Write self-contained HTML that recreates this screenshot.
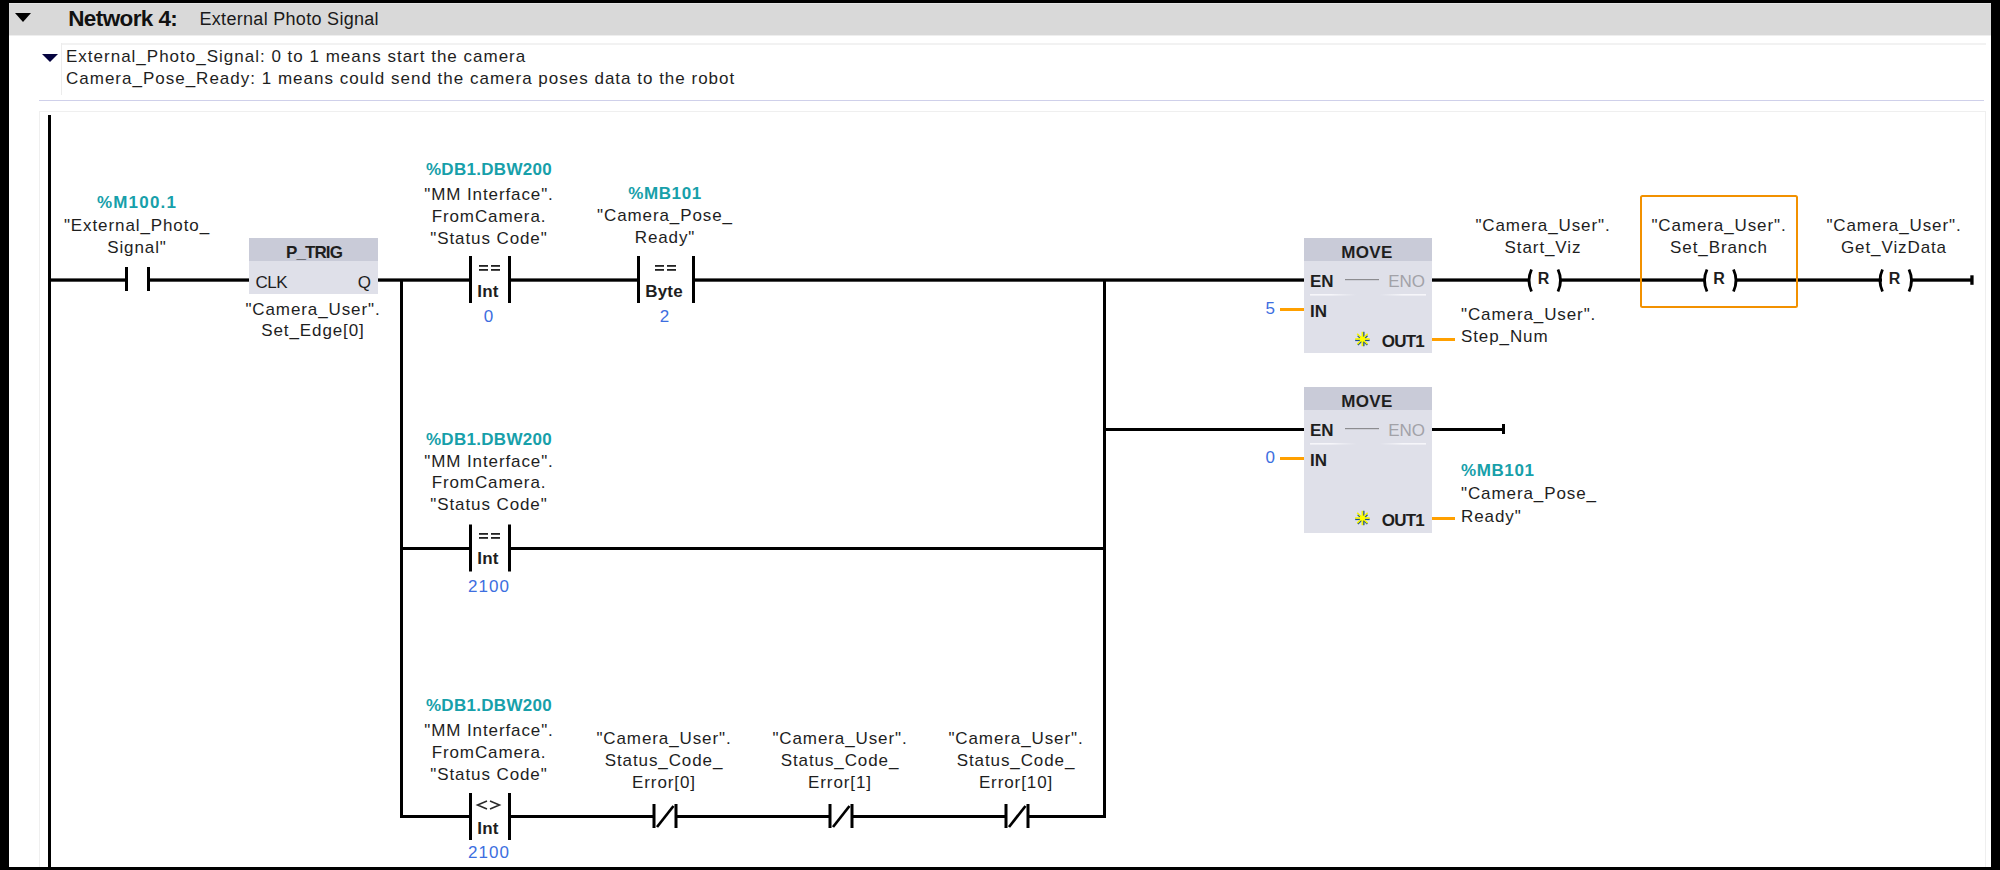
<!DOCTYPE html>
<html><head><meta charset="utf-8"><style>
html,body{margin:0;padding:0;width:2000px;height:870px;overflow:hidden;background:#000;font-family:"Liberation Sans", sans-serif;}
</style></head><body>
<svg width="2000" height="870" viewBox="0 0 2000 870" style="position:absolute;left:0;top:0" font-family='"Liberation Sans", sans-serif'>
<defs><linearGradient id="sepg" x1="0" x2="1" y1="0" y2="0"><stop offset="0" stop-color="#f6f6fa"/><stop offset="0.18" stop-color="#f6f6fa"/><stop offset="0.4" stop-color="#f6f6fa" stop-opacity="0"/><stop offset="0.6" stop-color="#f6f6fa" stop-opacity="0"/><stop offset="0.8" stop-color="#f6f6fa"/><stop offset="1" stop-color="#f6f6fa"/></linearGradient></defs>
<rect x="0" y="0" width="2000" height="870" fill="#000"/>
<rect x="9" y="3" width="1982" height="864" fill="#ffffff"/>
<rect x="9" y="3" width="1982" height="32" fill="#d9d9d9"/>
<rect x="9" y="3" width="1982" height="1" fill="#e4e4e4"/>
<rect x="9" y="35" width="1982" height="1" fill="#eeeeee"/>
<path d="M15,13 L31,13 L23,22 Z" fill="#000"/>
<text x="68.2" y="25.7" font-size="22.5" fill="#111" text-anchor="start" font-weight="bold" letter-spacing="-0.6">Network 4:</text>
<text x="199.5" y="24.7" font-size="18" fill="#1a1a1a" text-anchor="start" font-weight="normal" letter-spacing="0.3">External Photo Signal</text>
<rect x="61" y="43" width="1925" height="2" fill="#f2f2f2"/>
<rect x="61" y="43" width="1" height="52" fill="#ececec"/>
<path d="M42,54 L58,54 L50,62 Z" fill="#05033f"/>
<text x="66" y="61.8" font-size="17" fill="#1e1e1e" text-anchor="start" font-weight="normal" letter-spacing="1.0">External_Photo_Signal: 0 to 1 means start the camera</text>
<text x="66" y="83.5" font-size="17" fill="#1e1e1e" text-anchor="start" font-weight="normal" letter-spacing="1.0">Camera_Pose_Ready: 1 means could send the camera poses data to the robot</text>
<rect x="39" y="100" width="1945" height="1" fill="#cfd0ea"/>
<rect x="39" y="111" width="1946" height="1" fill="#efefef"/>
<rect x="39" y="111" width="1" height="756" fill="#efefef"/>
<rect x="1985" y="111" width="1" height="756" fill="#efefef"/>
<rect x="48" y="115" width="3" height="752" fill="#000"/>
<rect x="51" y="278.4" width="74" height="3.3" fill="#000"/>
<rect x="150" y="278.4" width="99" height="3.3" fill="#000"/>
<rect x="378" y="278.4" width="91" height="3.3" fill="#000"/>
<rect x="511" y="278.4" width="126" height="3.3" fill="#000"/>
<rect x="695" y="278.4" width="609" height="3.3" fill="#000"/>
<rect x="1432" y="278.4" width="98" height="3.3" fill="#000"/>
<rect x="1560" y="278.4" width="146" height="3.3" fill="#000"/>
<rect x="1735" y="278.4" width="147" height="3.3" fill="#000"/>
<rect x="1910" y="278.4" width="63" height="3.3" fill="#000"/>
<rect x="1970.3" y="275.3" width="3.3" height="9.5" fill="#000"/>
<rect x="400" y="279" width="3" height="539" fill="#000"/>
<rect x="1103" y="279" width="3" height="539" fill="#000"/>
<rect x="400" y="547" width="69" height="3" fill="#000"/>
<rect x="511" y="547" width="595" height="3" fill="#000"/>
<rect x="400" y="815" width="69" height="3" fill="#000"/>
<rect x="511" y="815" width="144" height="3" fill="#000"/>
<rect x="675" y="815" width="156" height="3" fill="#000"/>
<rect x="851" y="815" width="156" height="3" fill="#000"/>
<rect x="1027" y="815" width="79" height="3" fill="#000"/>
<rect x="1103" y="428" width="201" height="3" fill="#000"/>
<rect x="1432" y="428" width="71" height="3" fill="#000"/>
<rect x="1502" y="424" width="3" height="10" fill="#000"/>
<rect x="125.0" y="267" width="3" height="24" fill="#000"/>
<rect x="147.0" y="267" width="3" height="24" fill="#000"/>
<text x="137" y="207.5" font-size="17" fill="#17a0aa" text-anchor="middle" font-weight="bold" letter-spacing="1.2">%M100.1</text>
<text x="137" y="231.4" font-size="17" fill="#1e1e1e" text-anchor="middle" font-weight="normal" letter-spacing="0.9">"External_Photo_</text>
<text x="137" y="253" font-size="17" fill="#1e1e1e" text-anchor="middle" font-weight="normal" letter-spacing="0.9">Signal"</text>
<rect x="249" y="238" width="129" height="56" fill="#dfe0e9"/>
<rect x="249" y="238" width="129" height="23" fill="#c9cbd8"/>
<text x="314" y="258.2" font-size="17" fill="#1e1e1e" text-anchor="middle" font-weight="bold" letter-spacing="-0.9">P_TRIG</text>
<text x="255.5" y="287.8" font-size="17" fill="#1e1e1e" text-anchor="start" font-weight="normal" letter-spacing="-0.5">CLK</text>
<text x="371" y="287.8" font-size="17" fill="#1e1e1e" text-anchor="end" font-weight="normal" letter-spacing="0">Q</text>
<text x="313" y="315" font-size="17" fill="#1e1e1e" text-anchor="middle" font-weight="normal" letter-spacing="0.9">"Camera_User".</text>
<text x="313" y="336" font-size="17" fill="#1e1e1e" text-anchor="middle" font-weight="normal" letter-spacing="0.9">Set_Edge[0]</text>
<rect x="469" y="256" width="3" height="47" fill="#000"/>
<rect x="508" y="256" width="3" height="47" fill="#000"/>
<rect x="479.0" y="265" width="9" height="1.8" fill="#222"/>
<rect x="491.0" y="265" width="9" height="1.8" fill="#222"/>
<rect x="479.0" y="269" width="9" height="1.8" fill="#222"/>
<rect x="491.0" y="269" width="9" height="1.8" fill="#222"/>
<text x="488.0" y="297" font-size="17" fill="#1e1e1e" text-anchor="middle" font-weight="bold" letter-spacing="0.2">Int</text>
<text x="489.0" y="322" font-size="17" fill="#3d6ee0" text-anchor="middle" font-weight="normal" letter-spacing="1">0</text>
<text x="489" y="174.7" font-size="17" fill="#17a0aa" text-anchor="middle" font-weight="bold" letter-spacing="0.3">%DB1.DBW200</text>
<text x="489" y="199.8" font-size="17" fill="#1e1e1e" text-anchor="middle" font-weight="normal" letter-spacing="0.9">"MM Interface".</text>
<text x="489" y="221.6" font-size="17" fill="#1e1e1e" text-anchor="middle" font-weight="normal" letter-spacing="0.9">FromCamera.</text>
<text x="489" y="243.5" font-size="17" fill="#1e1e1e" text-anchor="middle" font-weight="normal" letter-spacing="0.9">"Status Code"</text>
<rect x="637" y="256" width="3" height="47" fill="#000"/>
<rect x="692" y="256" width="3" height="47" fill="#000"/>
<rect x="655.0" y="265" width="9" height="1.8" fill="#222"/>
<rect x="667.0" y="265" width="9" height="1.8" fill="#222"/>
<rect x="655.0" y="269" width="9" height="1.8" fill="#222"/>
<rect x="667.0" y="269" width="9" height="1.8" fill="#222"/>
<text x="664.0" y="297" font-size="17" fill="#1e1e1e" text-anchor="middle" font-weight="bold" letter-spacing="0.2">Byte</text>
<text x="665.0" y="322" font-size="17" fill="#3d6ee0" text-anchor="middle" font-weight="normal" letter-spacing="1">2</text>
<text x="665" y="199.4" font-size="17" fill="#17a0aa" text-anchor="middle" font-weight="bold" letter-spacing="0.6">%MB101</text>
<text x="665" y="221.4" font-size="17" fill="#1e1e1e" text-anchor="middle" font-weight="normal" letter-spacing="0.9">"Camera_Pose_</text>
<text x="665" y="243.4" font-size="17" fill="#1e1e1e" text-anchor="middle" font-weight="normal" letter-spacing="0.9">Ready"</text>
<rect x="469" y="524.5" width="3" height="47.0" fill="#000"/>
<rect x="508" y="524.5" width="3" height="47.0" fill="#000"/>
<rect x="479.0" y="533" width="9" height="1.8" fill="#222"/>
<rect x="491.0" y="533" width="9" height="1.8" fill="#222"/>
<rect x="479.0" y="537" width="9" height="1.8" fill="#222"/>
<rect x="491.0" y="537" width="9" height="1.8" fill="#222"/>
<text x="488.0" y="564" font-size="17" fill="#1e1e1e" text-anchor="middle" font-weight="bold" letter-spacing="0.2">Int</text>
<text x="489.0" y="592" font-size="17" fill="#3d6ee0" text-anchor="middle" font-weight="normal" letter-spacing="1">2100</text>
<text x="489" y="444.7" font-size="17" fill="#17a0aa" text-anchor="middle" font-weight="bold" letter-spacing="0.3">%DB1.DBW200</text>
<text x="489" y="466.5" font-size="17" fill="#1e1e1e" text-anchor="middle" font-weight="normal" letter-spacing="0.9">"MM Interface".</text>
<text x="489" y="488.3" font-size="17" fill="#1e1e1e" text-anchor="middle" font-weight="normal" letter-spacing="0.9">FromCamera.</text>
<text x="489" y="510.2" font-size="17" fill="#1e1e1e" text-anchor="middle" font-weight="normal" letter-spacing="0.9">"Status Code"</text>
<rect x="469" y="793" width="3" height="47" fill="#000"/>
<rect x="508" y="793" width="3" height="47" fill="#000"/>
<polyline points="487.0,801 477.5,805 487.0,809" stroke="#2a2a2a" stroke-width="1.55" fill="none"/>
<polyline points="490.0,801 499.5,805 490.0,809" stroke="#2a2a2a" stroke-width="1.55" fill="none"/>
<text x="488.0" y="833.7" font-size="17" fill="#1e1e1e" text-anchor="middle" font-weight="bold" letter-spacing="0.2">Int</text>
<text x="489.0" y="858" font-size="17" fill="#3d6ee0" text-anchor="middle" font-weight="normal" letter-spacing="1">2100</text>
<text x="489" y="710.6" font-size="17" fill="#17a0aa" text-anchor="middle" font-weight="bold" letter-spacing="0.3">%DB1.DBW200</text>
<text x="489" y="736.3" font-size="17" fill="#1e1e1e" text-anchor="middle" font-weight="normal" letter-spacing="0.9">"MM Interface".</text>
<text x="489" y="757.8" font-size="17" fill="#1e1e1e" text-anchor="middle" font-weight="normal" letter-spacing="0.9">FromCamera.</text>
<text x="489" y="779.6" font-size="17" fill="#1e1e1e" text-anchor="middle" font-weight="normal" letter-spacing="0.9">"Status Code"</text>
<rect x="652.5" y="804" width="3" height="24" fill="#000"/>
<rect x="674.5" y="804" width="3" height="24" fill="#000"/>
<line x1="657" y1="827" x2="673.5" y2="806" stroke="#000" stroke-width="2.7"/>
<text x="664" y="744.4" font-size="17" fill="#1e1e1e" text-anchor="middle" font-weight="normal" letter-spacing="0.9">"Camera_User".</text>
<text x="664" y="766.4" font-size="17" fill="#1e1e1e" text-anchor="middle" font-weight="normal" letter-spacing="0.9">Status_Code_</text>
<text x="664" y="788.4" font-size="17" fill="#1e1e1e" text-anchor="middle" font-weight="normal" letter-spacing="0.9">Error[0]</text>
<rect x="828.5" y="804" width="3" height="24" fill="#000"/>
<rect x="850.5" y="804" width="3" height="24" fill="#000"/>
<line x1="833" y1="827" x2="849.5" y2="806" stroke="#000" stroke-width="2.7"/>
<text x="840" y="744.4" font-size="17" fill="#1e1e1e" text-anchor="middle" font-weight="normal" letter-spacing="0.9">"Camera_User".</text>
<text x="840" y="766.4" font-size="17" fill="#1e1e1e" text-anchor="middle" font-weight="normal" letter-spacing="0.9">Status_Code_</text>
<text x="840" y="788.4" font-size="17" fill="#1e1e1e" text-anchor="middle" font-weight="normal" letter-spacing="0.9">Error[1]</text>
<rect x="1004.5" y="804" width="3" height="24" fill="#000"/>
<rect x="1026.5" y="804" width="3" height="24" fill="#000"/>
<line x1="1009" y1="827" x2="1025.5" y2="806" stroke="#000" stroke-width="2.7"/>
<text x="1016" y="744.4" font-size="17" fill="#1e1e1e" text-anchor="middle" font-weight="normal" letter-spacing="0.9">"Camera_User".</text>
<text x="1016" y="766.4" font-size="17" fill="#1e1e1e" text-anchor="middle" font-weight="normal" letter-spacing="0.9">Status_Code_</text>
<text x="1016" y="788.4" font-size="17" fill="#1e1e1e" text-anchor="middle" font-weight="normal" letter-spacing="0.9">Error[10]</text>
<rect x="1304" y="238" width="128" height="115" fill="#dfe0e9"/>
<rect x="1304" y="238" width="128" height="23" fill="#c9cbd8"/>
<text x="1367" y="258" font-size="17" fill="#1e1e1e" text-anchor="middle" font-weight="bold" letter-spacing="0.3">MOVE</text>
<text x="1310" y="287" font-size="17" fill="#1e1e1e" text-anchor="start" font-weight="bold" letter-spacing="0">EN</text>
<text x="1425" y="287" font-size="17" fill="#a2a2a8" text-anchor="end" font-weight="normal" letter-spacing="0">ENO</text>
<rect x="1345" y="279" width="34" height="1.2" fill="#8c8c90"/>
<rect x="1310" y="294" width="116" height="1.6" fill="url(#sepg)"/>
<text x="1310" y="317" font-size="17" fill="#1e1e1e" text-anchor="start" font-weight="bold" letter-spacing="0">IN</text>
<text x="1275" y="314" font-size="17" fill="#3d6ee0" text-anchor="end" font-weight="normal" letter-spacing="0">5</text>
<rect x="1280" y="308" width="24" height="3" fill="#ffa000"/>
<text x="1424" y="347" font-size="17" fill="#1e1e1e" text-anchor="end" font-weight="bold" letter-spacing="-0.8">OUT1</text>
<line x1="1355.2" y1="340.3" x2="1369.6000000000001" y2="340.3" stroke="#1b4f8c" stroke-width="1.6"/><line x1="1363.7" y1="331.8" x2="1363.7" y2="346.2" stroke="#1b4f8c" stroke-width="1.6"/><line x1="1357.8000000000002" y1="335.6" x2="1367.4" y2="345" stroke="#1b4f8c" stroke-width="1.6"/><line x1="1357.8000000000002" y1="345" x2="1367.4" y2="335.6" stroke="#1b4f8c" stroke-width="1.6"/><line x1="1355.2" y1="339" x2="1369.6000000000001" y2="339" stroke="#f4f400" stroke-width="1.7"/><line x1="1362.4" y1="331.8" x2="1362.4" y2="346.2" stroke="#f4f400" stroke-width="1.7"/><line x1="1357.2" y1="333.8" x2="1367.6000000000001" y2="344.2" stroke="#f4f400" stroke-width="1.6"/><line x1="1357.2" y1="344.2" x2="1367.6000000000001" y2="333.8" stroke="#f4f400" stroke-width="1.6"/><circle cx="1362.4" cy="339" r="2.6" fill="#ffff00"/>
<rect x="1432" y="338" width="23" height="3" fill="#ffa000"/>
<text x="1461" y="320" font-size="17" fill="#1e1e1e" text-anchor="start" font-weight="normal" letter-spacing="0.9">"Camera_User".</text>
<text x="1461" y="342" font-size="17" fill="#1e1e1e" text-anchor="start" font-weight="normal" letter-spacing="0.9">Step_Num</text>
<rect x="1304" y="387" width="128" height="146" fill="#dfe0e9"/>
<rect x="1304" y="387" width="128" height="23" fill="#c9cbd8"/>
<text x="1367" y="407" font-size="17" fill="#1e1e1e" text-anchor="middle" font-weight="bold" letter-spacing="0.3">MOVE</text>
<text x="1310" y="436" font-size="17" fill="#1e1e1e" text-anchor="start" font-weight="bold" letter-spacing="0">EN</text>
<text x="1425" y="436" font-size="17" fill="#a2a2a8" text-anchor="end" font-weight="normal" letter-spacing="0">ENO</text>
<rect x="1345" y="428" width="34" height="1.2" fill="#8c8c90"/>
<rect x="1310" y="443" width="116" height="1.6" fill="url(#sepg)"/>
<text x="1310" y="466" font-size="17" fill="#1e1e1e" text-anchor="start" font-weight="bold" letter-spacing="0">IN</text>
<text x="1275" y="463" font-size="17" fill="#3d6ee0" text-anchor="end" font-weight="normal" letter-spacing="0">0</text>
<rect x="1280" y="457" width="24" height="3" fill="#ffa000"/>
<text x="1424" y="526" font-size="17" fill="#1e1e1e" text-anchor="end" font-weight="bold" letter-spacing="-0.8">OUT1</text>
<line x1="1355.2" y1="519.3" x2="1369.6000000000001" y2="519.3" stroke="#1b4f8c" stroke-width="1.6"/><line x1="1363.7" y1="510.8" x2="1363.7" y2="525.2" stroke="#1b4f8c" stroke-width="1.6"/><line x1="1357.8000000000002" y1="514.6" x2="1367.4" y2="524" stroke="#1b4f8c" stroke-width="1.6"/><line x1="1357.8000000000002" y1="524" x2="1367.4" y2="514.6" stroke="#1b4f8c" stroke-width="1.6"/><line x1="1355.2" y1="518" x2="1369.6000000000001" y2="518" stroke="#f4f400" stroke-width="1.7"/><line x1="1362.4" y1="510.8" x2="1362.4" y2="525.2" stroke="#f4f400" stroke-width="1.7"/><line x1="1357.2" y1="512.8" x2="1367.6000000000001" y2="523.2" stroke="#f4f400" stroke-width="1.6"/><line x1="1357.2" y1="523.2" x2="1367.6000000000001" y2="512.8" stroke="#f4f400" stroke-width="1.6"/><circle cx="1362.4" cy="518" r="2.6" fill="#ffff00"/>
<rect x="1432" y="517" width="23" height="3" fill="#ffa000"/>
<text x="1461" y="476" font-size="17" fill="#17a0aa" text-anchor="start" font-weight="bold" letter-spacing="0.6">%MB101</text>
<text x="1461" y="499.3" font-size="17" fill="#1e1e1e" text-anchor="start" font-weight="normal" letter-spacing="0.9">"Camera_Pose_</text>
<text x="1461" y="521.8" font-size="17" fill="#1e1e1e" text-anchor="start" font-weight="normal" letter-spacing="0.9">Ready"</text>
<path d="M1531.5,269.5 Q1526.5,280.5 1531.5,291.5" stroke="#000" stroke-width="2.8" fill="none"/>
<path d="M1558,269.5 Q1563,280.5 1558,291.5" stroke="#000" stroke-width="2.8" fill="none"/>
<text x="1543.5" y="284" font-size="16" fill="#1e1e1e" text-anchor="middle" font-weight="bold" letter-spacing="0">R</text>
<text x="1543" y="231" font-size="17" fill="#1e1e1e" text-anchor="middle" font-weight="normal" letter-spacing="0.9">"Camera_User".</text>
<text x="1543" y="253" font-size="17" fill="#1e1e1e" text-anchor="middle" font-weight="normal" letter-spacing="0.9">Start_Viz</text>
<path d="M1707.0,269.5 Q1702.0,280.5 1707.0,291.5" stroke="#000" stroke-width="2.8" fill="none"/>
<path d="M1733.5,269.5 Q1738.5,280.5 1733.5,291.5" stroke="#000" stroke-width="2.8" fill="none"/>
<text x="1719.0" y="284" font-size="16" fill="#1e1e1e" text-anchor="middle" font-weight="bold" letter-spacing="0">R</text>
<text x="1719" y="231" font-size="17" fill="#1e1e1e" text-anchor="middle" font-weight="normal" letter-spacing="0.9">"Camera_User".</text>
<text x="1719" y="253" font-size="17" fill="#1e1e1e" text-anchor="middle" font-weight="normal" letter-spacing="0.9">Set_Branch</text>
<path d="M1882.5,269.5 Q1877.5,280.5 1882.5,291.5" stroke="#000" stroke-width="2.8" fill="none"/>
<path d="M1909,269.5 Q1914,280.5 1909,291.5" stroke="#000" stroke-width="2.8" fill="none"/>
<text x="1894.5" y="284" font-size="16" fill="#1e1e1e" text-anchor="middle" font-weight="bold" letter-spacing="0">R</text>
<text x="1894" y="231" font-size="17" fill="#1e1e1e" text-anchor="middle" font-weight="normal" letter-spacing="0.9">"Camera_User".</text>
<text x="1894" y="253" font-size="17" fill="#1e1e1e" text-anchor="middle" font-weight="normal" letter-spacing="0.9">Get_VizData</text>
<rect x="1641" y="196" width="156" height="111" rx="1.5" fill="none" stroke="#f29100" stroke-width="2"/>
</svg>
</body></html>
